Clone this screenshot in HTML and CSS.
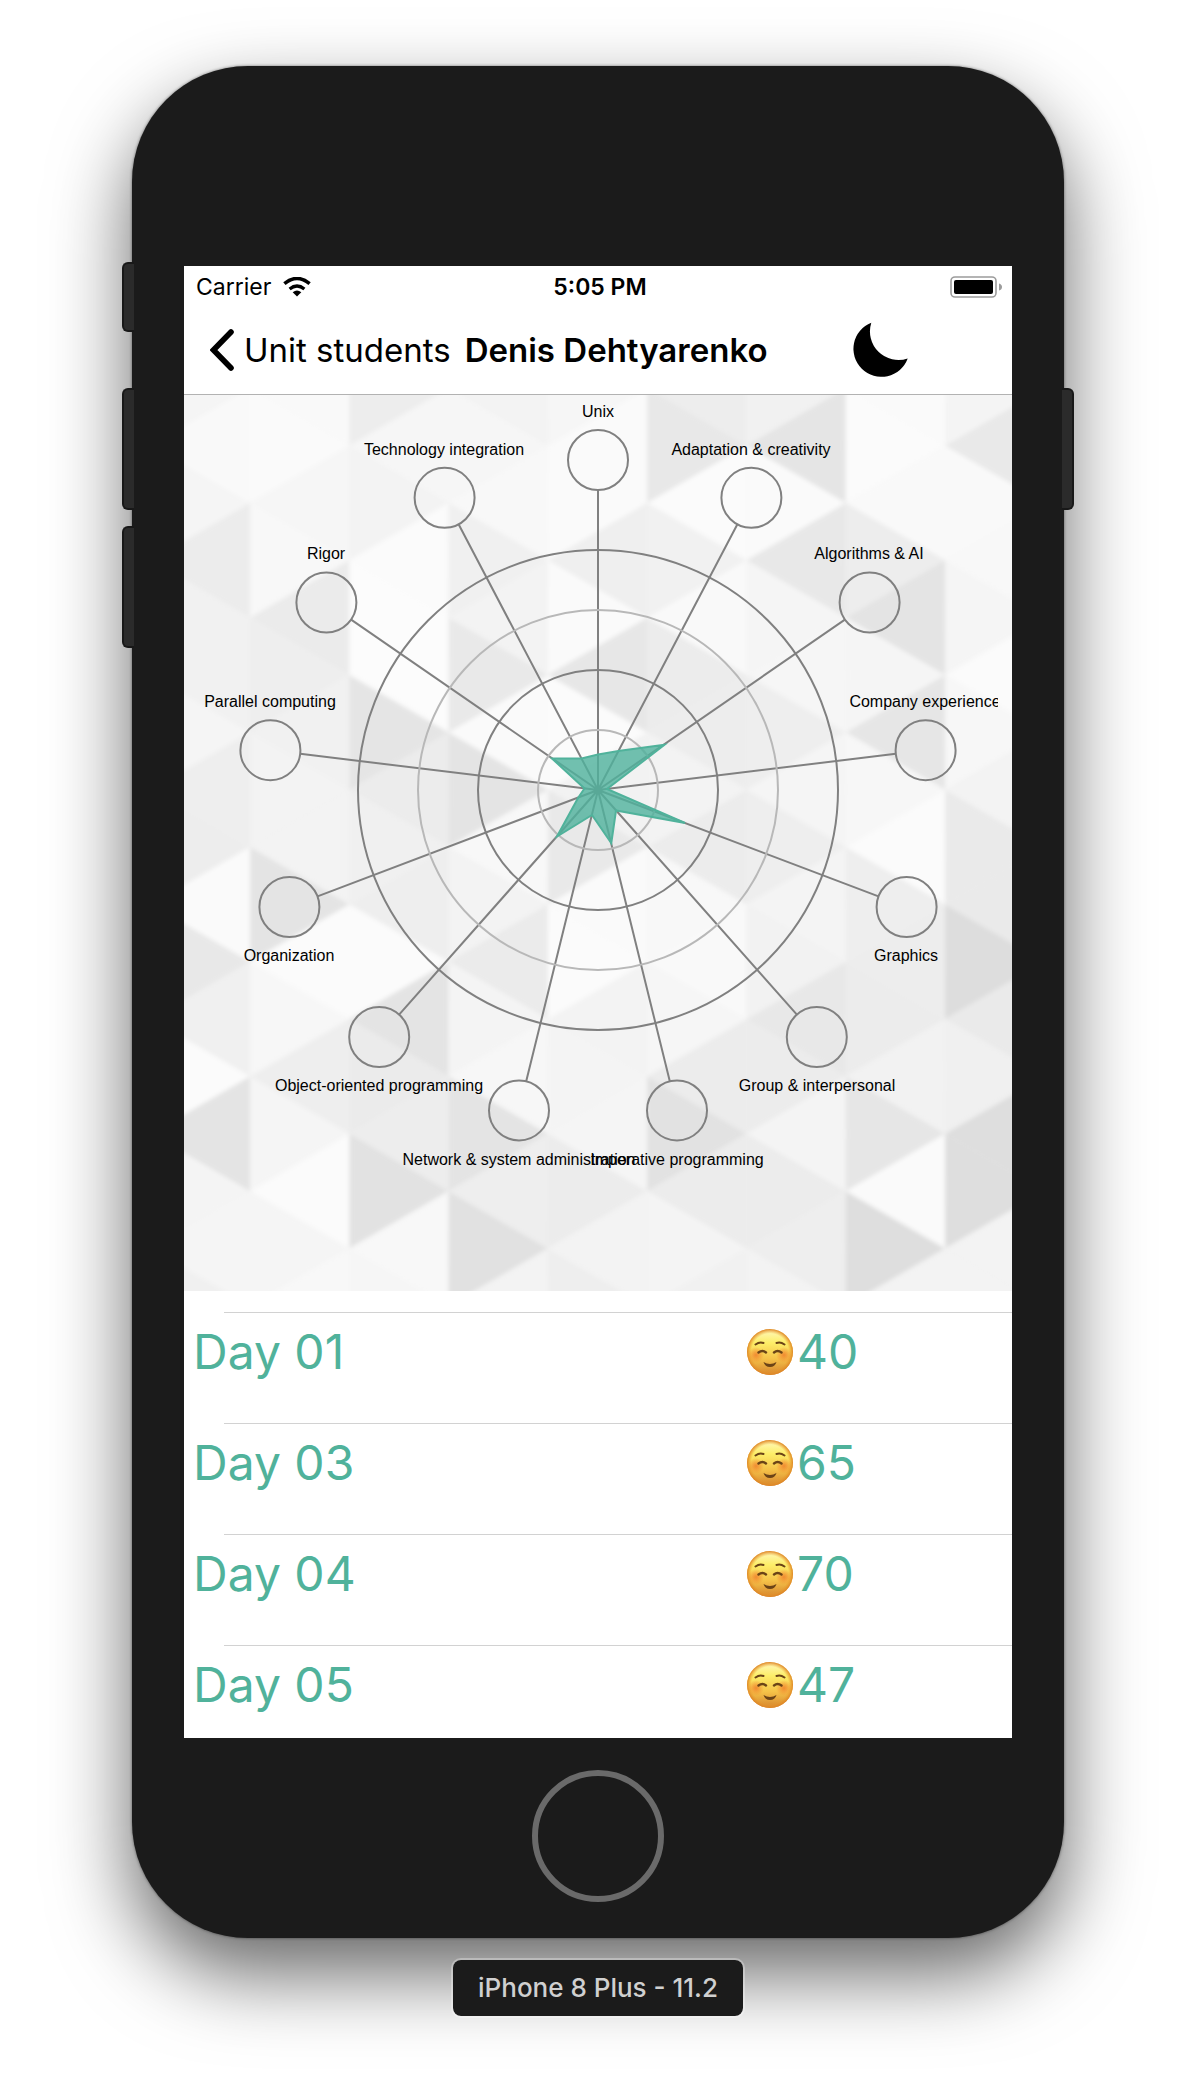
FILE: index.html
```html
<!DOCTYPE html>
<html lang="en">
<head>
<meta charset="utf-8">
<meta name="viewport" content="width=device-width, initial-scale=1">
<title>Denis Dehtyarenko</title>
<link rel="stylesheet" href="styles.css">
</head>
<body>
<svg class="sprite" aria-hidden="true">
  <defs>
    <linearGradient id="skin" x1="0" y1="0" x2="0" y2="1">
      <stop offset="0" stop-color="#fff8c0"/>
      <stop offset=".3" stop-color="#fdee68"/>
      <stop offset=".65" stop-color="#f5c248"/>
      <stop offset="1" stop-color="#d4832e"/>
    </linearGradient>
    <radialGradient id="rim">
      <stop offset=".8" stop-color="#eda02c" stop-opacity="0"/>
      <stop offset="1" stop-color="#dd8426"/>
    </radialGradient>
    <radialGradient id="blush">
      <stop offset="0" stop-color="#f07f2c" stop-opacity=".85"/>
      <stop offset="1" stop-color="#f07f2c" stop-opacity="0"/>
    </radialGradient>
  </defs>
  <symbol id="smile" viewBox="0 0 46 46">
    <circle cx="23" cy="23" r="23" fill="url(#skin)"/>
    <circle cx="23" cy="23" r="23" fill="url(#rim)"/>
    <circle cx="9" cy="26" r="8" fill="url(#blush)"/>
    <circle cx="37" cy="26" r="8" fill="url(#blush)"/>
    <g fill="none" stroke="#6b4417" stroke-width="2" stroke-linecap="round">
      <path d="M8.500 15.500q4-3 8-1.500M37.500 15.500q-4-3-8-1.500"/>
      <path d="M11.500 23.500q4-3 7.500 0M27 23.500q3.500-3 7.500 0" stroke-width="2.400"/>
    </g>
    <path d="M16.500 33q6.500 4 13 0q-1.500 5-6.500 5t-6.500-5z" fill="#6b4417"/>
  </symbol>
</svg>
<main class="stage">
  <div class="phone">
    <span class="key key-mute"></span>
    <span class="key key-up"></span>
    <span class="key key-down"></span>
    <span class="key key-power"></span>
    <div class="screen">
      <div class="status">
        <div class="carrier">
          <span>Carrier</span>
          <svg width="28" height="20" viewBox="0 0 28 20" aria-label="Wi-Fi">
            <path d="M14 19.500l4.300-4.200q-4.300-3.400-8.600 0z"/>
            <path d="M6.600 12q7.400-6 14.800 0" fill="none" stroke="#000" stroke-width="3.200"/>
            <path d="M1.400 6.700q12.600-10.400 25.200 0" fill="none" stroke="#000" stroke-width="3.600"/>
          </svg>
        </div>
        <time class="clock">5:05 PM</time>
        <svg class="battery" width="52" height="22" viewBox="0 0 52 22" aria-label="Battery">
          <rect x="1" y="1" width="45" height="20" rx="4" fill="none" stroke="#9c9c9c" stroke-width="1.600"/>
          <rect x="4" y="4" width="39" height="14" rx="2"/>
          <path d="M49 7.500q3 1 3 3.500t-3 3.500z" fill="#9c9c9c"/>
        </svg>
      </div>
      <header class="nav">
        <a class="back" href="#students">
          <svg width="24" height="42" viewBox="0 0 24 42" aria-hidden="true"><path d="M21 3L3.500 21L21 39" fill="none" stroke="#000" stroke-width="5.600" stroke-linecap="round"/></svg>
          <span>Unit students</span>
        </a>
        <h1 class="title">Denis Dehtyarenko</h1>
        <button class="night" type="button" aria-label="Night mode">
          <svg width="56" height="56" viewBox="0 0 56 56"><path d="M19.300 0.700A28 28 0 1 0 55.700 36.500A28.600 28.600 0 0 1 19.300 0.700z"/></svg>
        </button>
      </header>
      <svg class="chart" viewBox="0 0 828 896" role="img" aria-label="Skills">
        <defs>
          <filter id="soft" x="0" y="0" width="1" height="1"><feGaussianBlur stdDeviation="2.200"/></filter>
          <clipPath id="plot"><rect x="14" y="0" width="800" height="896"/></clipPath>
        </defs>
        <rect width="828" height="896" fill="#f4f4f4"/>
        <g filter="url(#soft)"><g id="facets" transform="translate(-33.300 -6.700) scale(99.300 57.350)"></g></g>
        <g class="web">
          <path d="M414 395V95M414 395L553.400 129.300M414 395L660.900 224.600M414 395L711.800 358.800M414 395L694.500 501.400M414 395L612.900 619.600M414 395L485.800 686.300M414 395L342.200 686.300M414 395L215.100 619.600M414 395L133.500 501.400M414 395L116.200 358.800M414 395L167.100 224.600M414 395L274.600 129.300"/>
          <circle cx="414" cy="395" r="60" class="minor"/>
          <circle cx="414" cy="395" r="120"/>
          <circle cx="414" cy="395" r="180" class="minor"/>
          <circle cx="414" cy="395" r="240"/>
          <circle cx="414" cy="65" r="30"/>
          <circle cx="567.400" cy="102.800" r="30"/>
          <circle cx="685.600" cy="207.500" r="30"/>
          <circle cx="741.600" cy="355.200" r="30"/>
          <circle cx="722.600" cy="512" r="30"/>
          <circle cx="632.800" cy="642" r="30"/>
          <circle cx="493" cy="715.400" r="30"/>
          <circle cx="335" cy="715.400" r="30"/>
          <circle cx="195.200" cy="642" r="30"/>
          <circle cx="105.400" cy="512" r="30"/>
          <circle cx="86.400" cy="355.200" r="30"/>
          <circle cx="142.400" cy="207.500" r="30"/>
          <circle cx="260.600" cy="102.800" r="30"/>
        </g>
        <path class="score" d="M414 359.500L436 355.700L480.500 349.800L423 394L501 428L432 415.500L427.300 448L408 420L373 441.500L394 403L400.500 393.500L368 363.500L397.500 363.500z"/>
        <g class="labels" clip-path="url(#plot)">
          <text x="414" y="22">Unix</text>
          <text x="567" y="60">Adaptation &amp; creativity</text>
          <text x="685" y="164">Algorithms &amp; AI</text>
          <text x="741" y="312">Company experience</text>
          <text x="722" y="566">Graphics</text>
          <text x="633" y="696">Group &amp; interpersonal</text>
          <text x="493" y="770">Imperative programming</text>
          <text x="335" y="770">Network &amp; system administration</text>
          <text x="195" y="696">Object-oriented programming</text>
          <text x="105" y="566">Organization</text>
          <text x="86" y="312">Parallel computing</text>
          <text x="142" y="164">Rigor</text>
          <text x="260" y="60">Technology integration</text>
        </g>
      </svg>
      <div class="days">
        <table>
          <tbody>
            <tr><th scope="row">Day 01</th><td><span class="mark"><svg class="face" aria-label="Smiling"><use href="#smile"/></svg>40</span></td></tr>
            <tr><th scope="row">Day 03</th><td><span class="mark"><svg class="face" aria-label="Smiling"><use href="#smile"/></svg>65</span></td></tr>
            <tr><th scope="row">Day 04</th><td><span class="mark"><svg class="face" aria-label="Smiling"><use href="#smile"/></svg>70</span></td></tr>
            <tr><th scope="row">Day 05</th><td><span class="mark"><svg class="face" aria-label="Smiling"><use href="#smile"/></svg>47</span></td></tr>
          </tbody>
        </table>
      </div>
    </div>
    <button class="home" type="button" aria-label="Home"></button>
  </div>
  <p class="device">iPhone 8 Plus - 11.2</p>
</main>
<script src="facets.js"></script>
</body>
</html>
```
FILE: styles.css
```css
* { box-sizing: border-box; }

body {
  margin: 0;
  background: #fff;
  color: #000;
  font-family: Inter, "Liberation Sans", sans-serif;
}

.sprite { position: absolute; width: 0; height: 0; }

.stage {
  display: flex;
  flex-direction: column;
  align-items: center;
  padding: 66px 24px 80px;
}

.phone {
  position: relative;
  display: flex;
  flex-direction: column;
  align-items: center;
  width: 100%;
  max-width: 932px;
  padding: 200px 52px 36px;
  border-radius: 116px;
  background: #1b1b1b;
  box-shadow: 0 0 3px rgba(0, 0, 0, .5), 0 36px 80px rgba(0, 0, 0, .6);
}

/* Side keys */
.key {
  position: absolute;
  left: -10px;
  width: 12px;
  height: 122px;
  border: 2px solid #181818;
  border-right: 0;
  border-radius: 6px 0 0 6px;
  background: #2b2b2b;
}
.key-mute { top: 196px; height: 70px; }
.key-up { top: 322px; }
.key-down { top: 460px; }
.key-power {
  top: 322px;
  right: -10px;
  left: auto;
  border: 2px solid #181818;
  border-left: 0;
  border-radius: 0 6px 6px 0;
}

.screen {
  width: 100%;
  overflow: hidden;
  background: #fff;
}

.status {
  display: grid;
  grid-template-columns: 1fr auto 1fr;
  align-items: center;
  height: 42px;
  padding: 0 10px 0 12px;
  font-size: 23px;
}
.carrier { display: flex; align-items: center; gap: 12px; }
.clock { padding-left: 2px; font-weight: 600; }
.battery { justify-self: end; }

.nav {
  display: flex;
  align-items: center;
  height: 87px;
  padding: 0 104px 2px 26px;
  border-bottom: 1px solid #b2b2b2;
}
.back {
  display: flex;
  align-items: center;
  gap: 10px;
  color: inherit;
  font-size: 33px;
  text-decoration: none;
}
.title { margin: 0 0 0 14px; font-size: 33px; font-weight: 600; }
.night {
  display: flex;
  margin-left: auto;
  padding: 0;
  border: 0;
  background: none;
}

.chart { display: block; width: 100%; }
.web { fill: none; stroke: #808080; stroke-width: 2; }
.web .minor { stroke: #b8b8b8; }
.score {
  fill: rgba(79, 178, 156, .8);
  stroke: #50b29b;
  stroke-width: 2;
}
.labels {
  font-family: "Liberation Sans", Arial, sans-serif;
  font-size: 16px;
  text-anchor: middle;
}

.days { padding-top: 21px; }
table { width: 100%; border-collapse: collapse; table-layout: fixed; }
tr { background: linear-gradient(#d2d2d2, #d2d2d2) 40px 0 / 100% 1px no-repeat; }
th, td {
  padding: 10px 0 41px 9px;
  color: #50b29b;
  font-size: 48px;
  font-weight: 400;
  line-height: 60px;
  text-align: left;
}
td { width: 32%; padding-left: 0; }
tr:last-child th, tr:last-child td { padding-bottom: 23px; }
.mark { display: flex; align-items: center; gap: 4px; }
.face { width: 46px; height: 46px; }

.home {
  width: 132px;
  height: 132px;
  margin-top: 32px;
  border: 6px solid #6a6a6a;
  border-radius: 50%;
  background: none;
}

.device {
  position: relative;
  margin: 20px 0 0;
  padding: 0 25px;
  border: 2px solid rgba(255, 255, 255, .3);
  border-radius: 10px;
  background: #1b1b1b;
  background-clip: padding-box;
  color: #d0d0d0;
  font-size: 26px;
  font-weight: 500;
  line-height: 56px;
}
```
FILE: facets.js
```js
// Grey level of every triangle, one row per vertical strip, top to bottom.
const strips = [
  'f5 f9 f5 ec f1 f1 f5 ee ed fa e8 f0 fb e4 f4 f5 f0',
  'f9 fa f6 f8 eb ee f1 f3 f3 e4 fb f7 ee f5 fb f5 f8',
  'ed f6 f3 fb fc fc e5 ec f0 ee fb e4 eb ed e2 f8 f6',
  'f3 f6 f8 f0 f3 e9 fa e4 f8 f3 eb f4 f7 e4 ee e1 f3',
  'f6 fa fa ef fa e7 fb f2 e9 fa fb f3 f4 f5 ec f3 ee',
  'ed e8 fb f1 f9 ec ed f3 ec f8 f9 f6 ec e2 ec f4 f1',
  'f1 e5 fa e8 f5 f6 ee f5 ee f4 f2 e8 ec f4 ec ee f3',
  'fa fb f9 ed e4 f5 e6 f7 fb ee ed ec f2 e6 fa de f3',
  'f4 e9 f9 f8 f5 fb f7 f3 ea ea dd ea f0 de de f3 f3',
];

const facets = document.getElementById('facets');

strips.forEach((shades, column) => {
  shades.split(' ').forEach((shade, i) => {
    const row = i - 1;
    const pointsRight = (column + row) % 2 !== 0;
    const path = document.createElementNS('http://www.w3.org/2000/svg', 'path');
    path.setAttribute('d', pointsRight
      ? `M${column} ${row}v2l1 -1z`
      : `M${column + 1} ${row}v2l-1 -1z`);
    path.setAttribute('fill', `#${shade}${shade}${shade}`);
    facets.append(path);
  });
});
```
